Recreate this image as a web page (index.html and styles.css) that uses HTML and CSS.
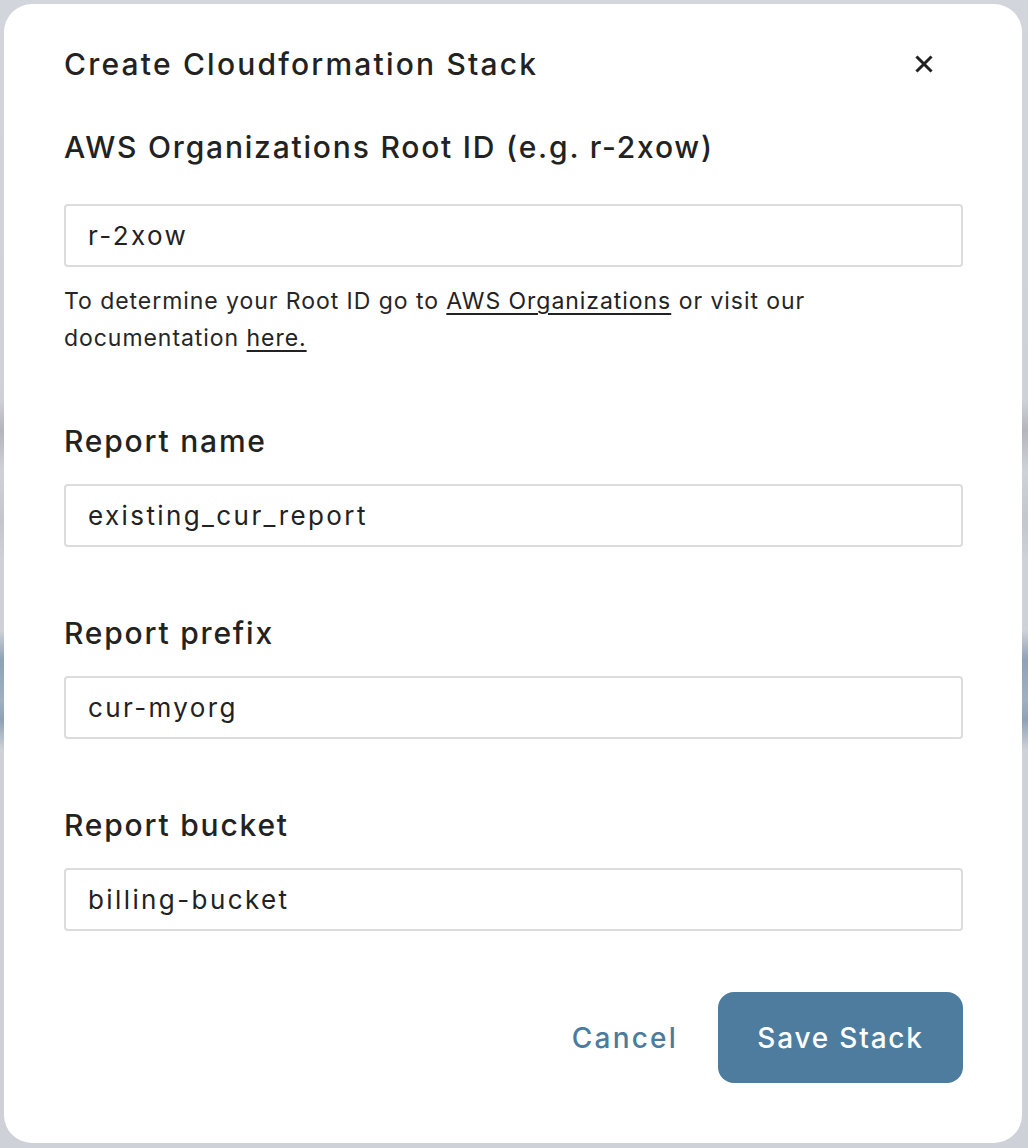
FILE: index.html
```html
<!DOCTYPE html>
<html lang="en">
<head>
<meta charset="utf-8">
<title>Create Cloudformation Stack</title>
<link rel="stylesheet" href="styles.css">
</head>
<body>
<div class="modal">
  <div class="modal-header">
    <h2 class="modal-title">Create Cloudformation Stack</h2>
    <button class="close-btn" aria-label="Close">
      <svg width="18" height="18" viewBox="0 0 18 18"><path d="M2.5 2.5 L15.5 15.5 M15.5 2.5 L2.5 15.5" stroke="#222" stroke-width="3" stroke-linecap="square" fill="none"/></svg>
    </button>
  </div>

  <div class="field field-first">
    <label class="field-label">AWS Organizations Root ID (e.g. r-2xow)</label>
    <div class="input">r-2xow</div>
  </div>
  <p class="helper">To determine your Root ID go to <a href="#">AWS Organizations</a> or visit our documentation <a href="#">here.</a></p>

  <div class="field">
    <label class="field-label">Report name</label>
    <div class="input">existing_cur_report</div>
  </div>

  <div class="field">
    <label class="field-label">Report prefix</label>
    <div class="input">cur-myorg</div>
  </div>

  <div class="field">
    <label class="field-label">Report bucket</label>
    <div class="input">billing-bucket</div>
  </div>

  <div class="modal-footer">
    <button class="btn-cancel">Cancel</button>
    <button class="btn-save">Save Stack</button>
  </div>
</div>
</body>
</html>
```

FILE: styles.css
```css
* { box-sizing: border-box; }

html, body { height: 100%; }

body {
  margin: 0;
  padding: 4px 6px 5px 4px;
  font-family: Inter, "Noto Sans", sans-serif;
  color: #222;
  background: linear-gradient(to bottom,
    #d3d5dc 0px, #cfd1d8 400px, #b3b4bc 430px, #cfd1d8 470px,
    #c4c6cd 520px, #cfd1d8 560px, #cfd1d8 630px, #8ea2b8 660px,
    #9fb0c2 700px, #8ea2b8 720px, #cfd1d8 750px, #cfd1d8 1148px);
}

.modal {
  background: #fff;
  border-radius: 28px;
  width: 1018px;
  height: 1139px;
  padding: 40px 59px 60px 60px;
  display: flex;
  flex-direction: column;
}

.modal-header {
  height: 40px;
  display: flex;
  align-items: center;
  justify-content: space-between;
}

.modal-title {
  margin: 0;
  font-size: 30px;
  letter-spacing: 2.2px;
  font-weight: 500;
  line-height: 40px;
  color: #222;
}

.close-btn {
  background: none;
  border: 0;
  padding: 0;
  margin-right: 30px;
  width: 18px;
  height: 18px;
  display: flex;
}

.field {
  display: flex;
  flex-direction: column;
  margin-top: 64px;
}

.field-first { margin-top: 41px; }

.field-label {
  font-size: 30px;
  letter-spacing: 1.8px;
  font-weight: 500;
  line-height: 44px;
  color: #222;
}

.input {
  margin-top: 21px;
  height: 63px;
  border: 2px solid #dcdcdc;
  border-radius: 4px;
  padding: 0 22px;
  display: flex;
  align-items: center;
  font-size: 26px;
  letter-spacing: 2.4px;
  color: #222;
}

.field-first .input { margin-top: 35px; }

.helper {
  margin: 16px 0 0;
  font-size: 23px;
  letter-spacing: 0.95px;
  line-height: 37px;
  color: #262626;
}

.helper a {
  color: #222;
  text-decoration: underline;
  text-underline-offset: 4px;
  text-decoration-thickness: 1.5px;
}

.field + .field { margin-top: 64px; }
.helper + .field { margin-top: 62px; }

.modal-footer {
  margin-top: 61px;
  display: flex;
  justify-content: flex-end;
  align-items: center;
  gap: 40px;
}

.btn-cancel {
  background: none;
  border: 0;
  padding: 0;
  font-family: inherit;
  font-size: 28px;
  letter-spacing: 2.2px;
  font-weight: 500;
  color: #4d7b9c;
}

.btn-save {
  height: 91px;
  width: 245px;
  border: 0;
  border-radius: 16px;
  background: #4d7c9e;
  color: #fff;
  font-family: inherit;
  font-size: 28px;
  letter-spacing: 1.8px;
  font-weight: 500;
}
```
